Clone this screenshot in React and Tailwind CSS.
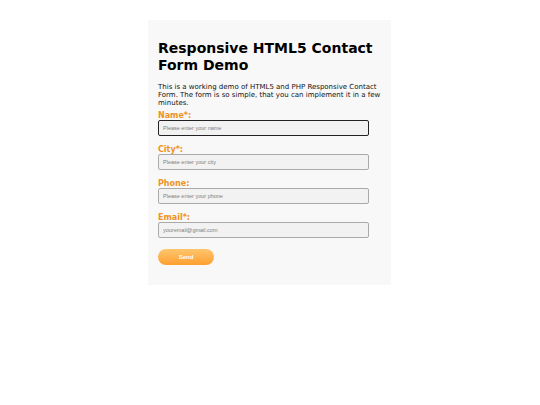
export default function App() {
  const fields = [
    { label: "Name*:", placeholder: "Please enter your name", focused: true },
    { label: "City*:", placeholder: "Please enter your city" },
    { label: "Phone:", placeholder: "Please enter your phone" },
    { label: "Email*:", placeholder: "youremail@gmail.com" },
  ];

  return (
    <div className="w-[540px] h-[405px] bg-white" style={{ fontFamily: '"DejaVu Sans", sans-serif' }}>
      <div className="ml-[148px] pt-[20px]">
        <div className="w-[243px] h-[265px] bg-[#f8f8f8] px-[10px] pt-[20px]">
          <h1 className="text-[14px] leading-[17px] font-bold text-black">
            Responsive HTML5 Contact Form Demo
          </h1>
          <p className="mt-[9px] text-[7px] leading-[8px] text-[#111]">
            This is a working demo of HTML5 and PHP Responsive Contact Form. The form is so simple, that you can implement it in a few minutes.
          </p>
          <form className="mt-[5px] flex flex-col gap-[10px]">
            {fields.map((f) => (
              <div key={f.label} className="flex flex-col">
                <label className="text-[8px] leading-[8px] font-bold text-[#ee9324]">
                  {f.label}
                </label>
                <div
                  className={`w-[211px] h-[16px] rounded-[2px] bg-[#f2f2f2] flex items-center px-[4px] ${
                    f.focused ? "border-[1.5px] border-[#222]" : "border border-[#aaa]"
                  }`}
                >
                  <span
                    className="text-[5.5px] text-[#808080]"
                    style={{ fontFamily: '"Liberation Sans", Arial, sans-serif' }}
                  >
                    {f.placeholder}
                  </span>
                </div>
              </div>
            ))}
          </form>
          <button
            type="button"
            className="mt-[11px] w-[56px] h-[16px] rounded-full bg-gradient-to-b from-[#ffc56b] to-[#fd9f2c] text-white text-[6px] font-bold"
            style={{ fontFamily: '"Liberation Sans", Arial, sans-serif' }}
          >
            Send
          </button>
        </div>
      </div>
    </div>
  );
}
